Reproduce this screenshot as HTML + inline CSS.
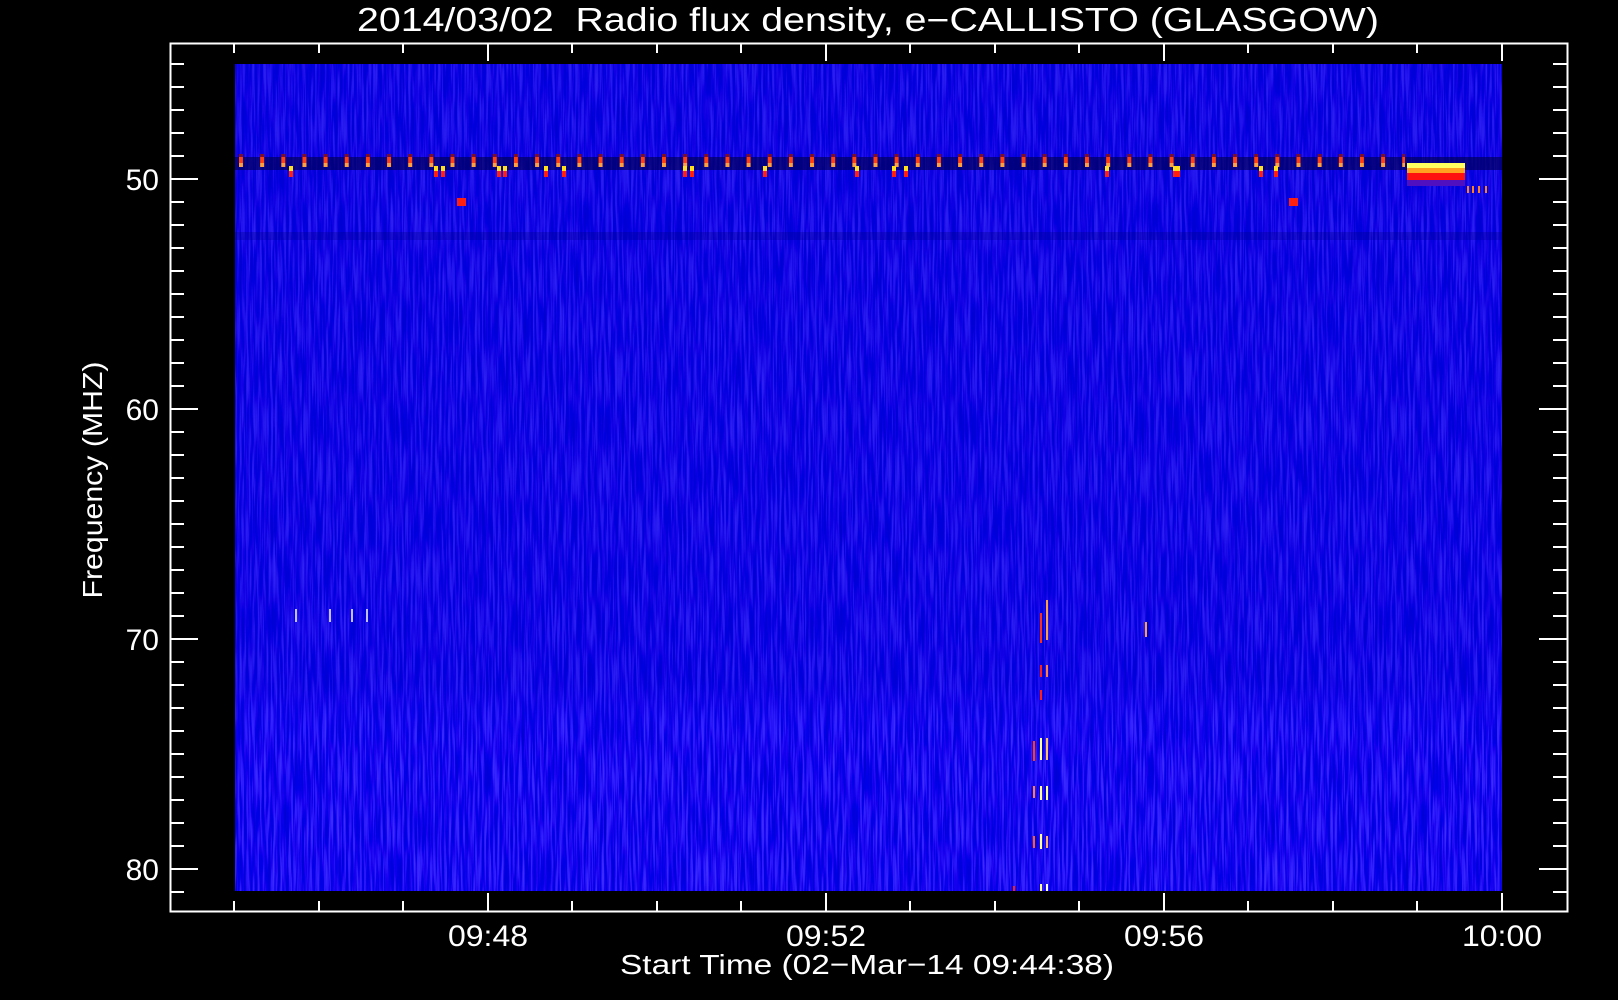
<!DOCTYPE html>
<html><head><meta charset="utf-8"><style>
html,body{margin:0;padding:0;background:#000;width:1618px;height:1000px;overflow:hidden}
svg{display:block}
text{font-family:"Liberation Sans",sans-serif;fill:#fff}
</style></head><body>
<svg width="1618" height="1000" viewBox="0 0 1618 1000" xmlns="http://www.w3.org/2000/svg">
<defs>
<filter id="nz" x="0" y="0" width="100%" height="100%">
<feTurbulence type="fractalNoise" baseFrequency="0.45 0.02" numOctaves="2" seed="3"/>
<feColorMatrix type="matrix" values="0.12 0 0 0 -0.05  0.08 0 0 0 -0.04  0.7 0 0 0 0.52  0 0 0 0 1"/>
</filter>
<linearGradient id="lg" x1="0" y1="0" x2="0" y2="1">
<stop offset="0" stop-color="#0000c8" stop-opacity="0.3"/>
<stop offset="0.75" stop-color="#0000c8" stop-opacity="0.25"/>
<stop offset="0.82" stop-color="#2020ff" stop-opacity="0.0"/>
<stop offset="1" stop-color="#2020ff" stop-opacity="0.0"/>
</linearGradient>
<pattern id="dots" x="239" y="0" width="21.15" height="1000" patternUnits="userSpaceOnUse">
<rect x="0" y="154" width="4" height="3" fill="#801020"/>
<rect x="0" y="157" width="4" height="6" fill="#ff4010"/>
<rect x="0" y="163" width="4" height="4" fill="#ffa040"/>
</pattern>
</defs>
<rect width="1618" height="1000" fill="#000"/>
<rect x="235" y="64" width="1267" height="827" fill="#0000e0"/>
<rect x="235" y="64" width="1267" height="827" filter="url(#nz)"/>
<rect x="235" y="64" width="1267" height="827" fill="url(#lg)"/>
<rect x="235" y="232" width="1267" height="8" fill="#000080" opacity="0.3"/>
<rect x="235" y="157" width="1267" height="13" fill="#000050" opacity="0.65"/>
<rect x="235" y="150" width="1170" height="20" fill="url(#dots)"/>
<g fill="#ffe020">
<rect x="289" y="166" width="4" height="5"/><rect x="434" y="166" width="4" height="5"/><rect x="441" y="166" width="4" height="5"/>
<rect x="497" y="166" width="4" height="5"/><rect x="503" y="166" width="4" height="5"/><rect x="544" y="166" width="4" height="5"/>
<rect x="562" y="166" width="4" height="5"/><rect x="683" y="166" width="4" height="5"/><rect x="690" y="166" width="4" height="5"/>
<rect x="763" y="166" width="4" height="5"/><rect x="855" y="166" width="4" height="5"/><rect x="892" y="166" width="4" height="5"/>
<rect x="904" y="166" width="4" height="5"/><rect x="1105" y="166" width="4" height="5"/><rect x="1173" y="166" width="4" height="5"/>
<rect x="1176" y="166" width="4" height="5"/><rect x="1259" y="166" width="4" height="5"/><rect x="1274" y="166" width="4" height="5"/>
</g>
<g fill="#ff2010">
<rect x="289" y="171" width="4" height="6"/><rect x="434" y="171" width="4" height="6"/><rect x="441" y="171" width="4" height="6"/>
<rect x="497" y="171" width="4" height="6"/><rect x="503" y="171" width="4" height="6"/><rect x="544" y="171" width="4" height="6"/>
<rect x="562" y="171" width="4" height="6"/><rect x="683" y="171" width="4" height="6"/><rect x="690" y="171" width="4" height="6"/>
<rect x="763" y="171" width="4" height="6"/><rect x="855" y="171" width="4" height="6"/><rect x="892" y="171" width="4" height="6"/>
<rect x="904" y="171" width="4" height="6"/><rect x="1105" y="171" width="4" height="6"/><rect x="1173" y="171" width="4" height="6"/>
<rect x="1176" y="171" width="4" height="6"/><rect x="1259" y="171" width="4" height="6"/><rect x="1274" y="171" width="4" height="6"/>
<rect x="457" y="198" width="9" height="8"/><rect x="1289" y="198" width="9" height="8"/>
</g>
<rect x="1407" y="163" width="58" height="5" fill="#ffff60"/>
<rect x="1407" y="168" width="58" height="5" fill="#ffa020"/>
<rect x="1407" y="173" width="58" height="7" fill="#ff1010"/>
<rect x="1407" y="180" width="58" height="6" fill="#5010c0"/>
<g fill="#ff8020"><rect x="1467" y="186" width="2" height="7"/><rect x="1472" y="186" width="2" height="7"/><rect x="1478" y="186" width="2" height="7"/><rect x="1485" y="186" width="2" height="7"/></g>
<g fill="#c0c0ff"><rect x="295" y="609" width="2" height="13"/><rect x="329" y="609" width="2" height="13"/><rect x="351" y="609" width="2" height="13"/><rect x="366" y="609" width="2" height="13"/></g>
<g>
<rect x="1040" y="613" width="2" height="30" fill="#ff3010"/><rect x="1046" y="600" width="2" height="40" fill="#ffa040"/>
<rect x="1040" y="665" width="2" height="12" fill="#ff2010"/><rect x="1046" y="665" width="2" height="12" fill="#ff8040"/>
<rect x="1040" y="690" width="2" height="10" fill="#ff2010"/>
<rect x="1040" y="738" width="2" height="22" fill="#ffff80"/><rect x="1046" y="738" width="2" height="22" fill="#ffc060"/><rect x="1033" y="741" width="2" height="20" fill="#ff4010"/>
<rect x="1040" y="786" width="2" height="14" fill="#ffff80"/><rect x="1046" y="786" width="2" height="14" fill="#ffff80"/><rect x="1033" y="786" width="2" height="12" fill="#ff8040"/>
<rect x="1040" y="834" width="2" height="15" fill="#ffff80"/><rect x="1046" y="836" width="2" height="12" fill="#ffb060"/><rect x="1033" y="836" width="2" height="12" fill="#ff6020"/>
<rect x="1040" y="884" width="2" height="7" fill="#ffff80"/><rect x="1046" y="884" width="2" height="7" fill="#ffffff"/><rect x="1013" y="886" width="2" height="5" fill="#ff2010"/>
<rect x="1145" y="622" width="2" height="15" fill="#ffa040"/>
</g>
<rect x="170.5" y="43.5" width="1397" height="868" fill="none" stroke="#fff" stroke-width="2"/>
<g stroke="#fff" stroke-width="2">
<path d="M170 64h14M170 87h14M170 110h14M170 133h14M170 156h14M170 179h28M170 202h14M170 225h14M170 248h14M170 271h14M170 294h14M170 317h14M170 340h14M170 363h14M170 386h14M170 409h28M170 432h14M170 455h14M170 478h14M170 501h14M170 524h14M170 547h14M170 570h14M170 593h14M170 616h14M170 639h28M170 662h14M170 685h14M170 708h14M170 731h14M170 754h14M170 777h14M170 800h14M170 823h14M170 846h14M170 869h28M170 892h14"/>
<path d="M1567 64h-14M1567 87h-14M1567 110h-14M1567 133h-14M1567 156h-14M1567 179h-28M1567 202h-14M1567 225h-14M1567 248h-14M1567 271h-14M1567 294h-14M1567 317h-14M1567 340h-14M1567 363h-14M1567 386h-14M1567 409h-28M1567 432h-14M1567 455h-14M1567 478h-14M1567 501h-14M1567 524h-14M1567 547h-14M1567 570h-14M1567 593h-14M1567 616h-14M1567 639h-28M1567 662h-14M1567 685h-14M1567 708h-14M1567 731h-14M1567 754h-14M1567 777h-14M1567 800h-14M1567 823h-14M1567 846h-14M1567 869h-28M1567 892h-14"/>
<path d="M234 43v10M319 43v10M403 43v10M488 43v18M572 43v10M657 43v10M741 43v10M826 43v18M910 43v10M995 43v10M1079 43v10M1164 43v18M1248 43v10M1333 43v10M1417 43v10M1502 43v18"/>
<path d="M234 911v-10M319 911v-10M403 911v-10M488 911v-18M572 911v-10M657 911v-10M741 911v-10M826 911v-18M910 911v-10M995 911v-10M1079 911v-10M1164 911v-18M1248 911v-10M1333 911v-10M1417 911v-10M1502 911v-18"/>
</g>
<text x="868" y="31" font-size="33" text-anchor="middle" textLength="1022" lengthAdjust="spacingAndGlyphs" xml:space="preserve">2014/03/02  Radio flux density, e−CALLISTO (GLASGOW)</text>
<g font-size="30" text-anchor="end">
<text x="159" y="190">50</text><text x="159" y="420">60</text><text x="159" y="650">70</text><text x="159" y="880">80</text>
</g>
<g font-size="30" text-anchor="middle">
<text x="488" y="946" textLength="80" lengthAdjust="spacingAndGlyphs">09:48</text><text x="826" y="946" textLength="80" lengthAdjust="spacingAndGlyphs">09:52</text><text x="1164" y="946" textLength="80" lengthAdjust="spacingAndGlyphs">09:56</text><text x="1502" y="946" textLength="80" lengthAdjust="spacingAndGlyphs">10:00</text>
</g>
<text x="867" y="974" font-size="28" text-anchor="middle" textLength="494" lengthAdjust="spacingAndGlyphs">Start Time (02−Mar−14 09:44:38)</text>
<text transform="translate(102,480) rotate(-90)" font-size="28" text-anchor="middle" textLength="237" lengthAdjust="spacingAndGlyphs">Frequency (MHZ)</text>
</svg>
</body></html>
